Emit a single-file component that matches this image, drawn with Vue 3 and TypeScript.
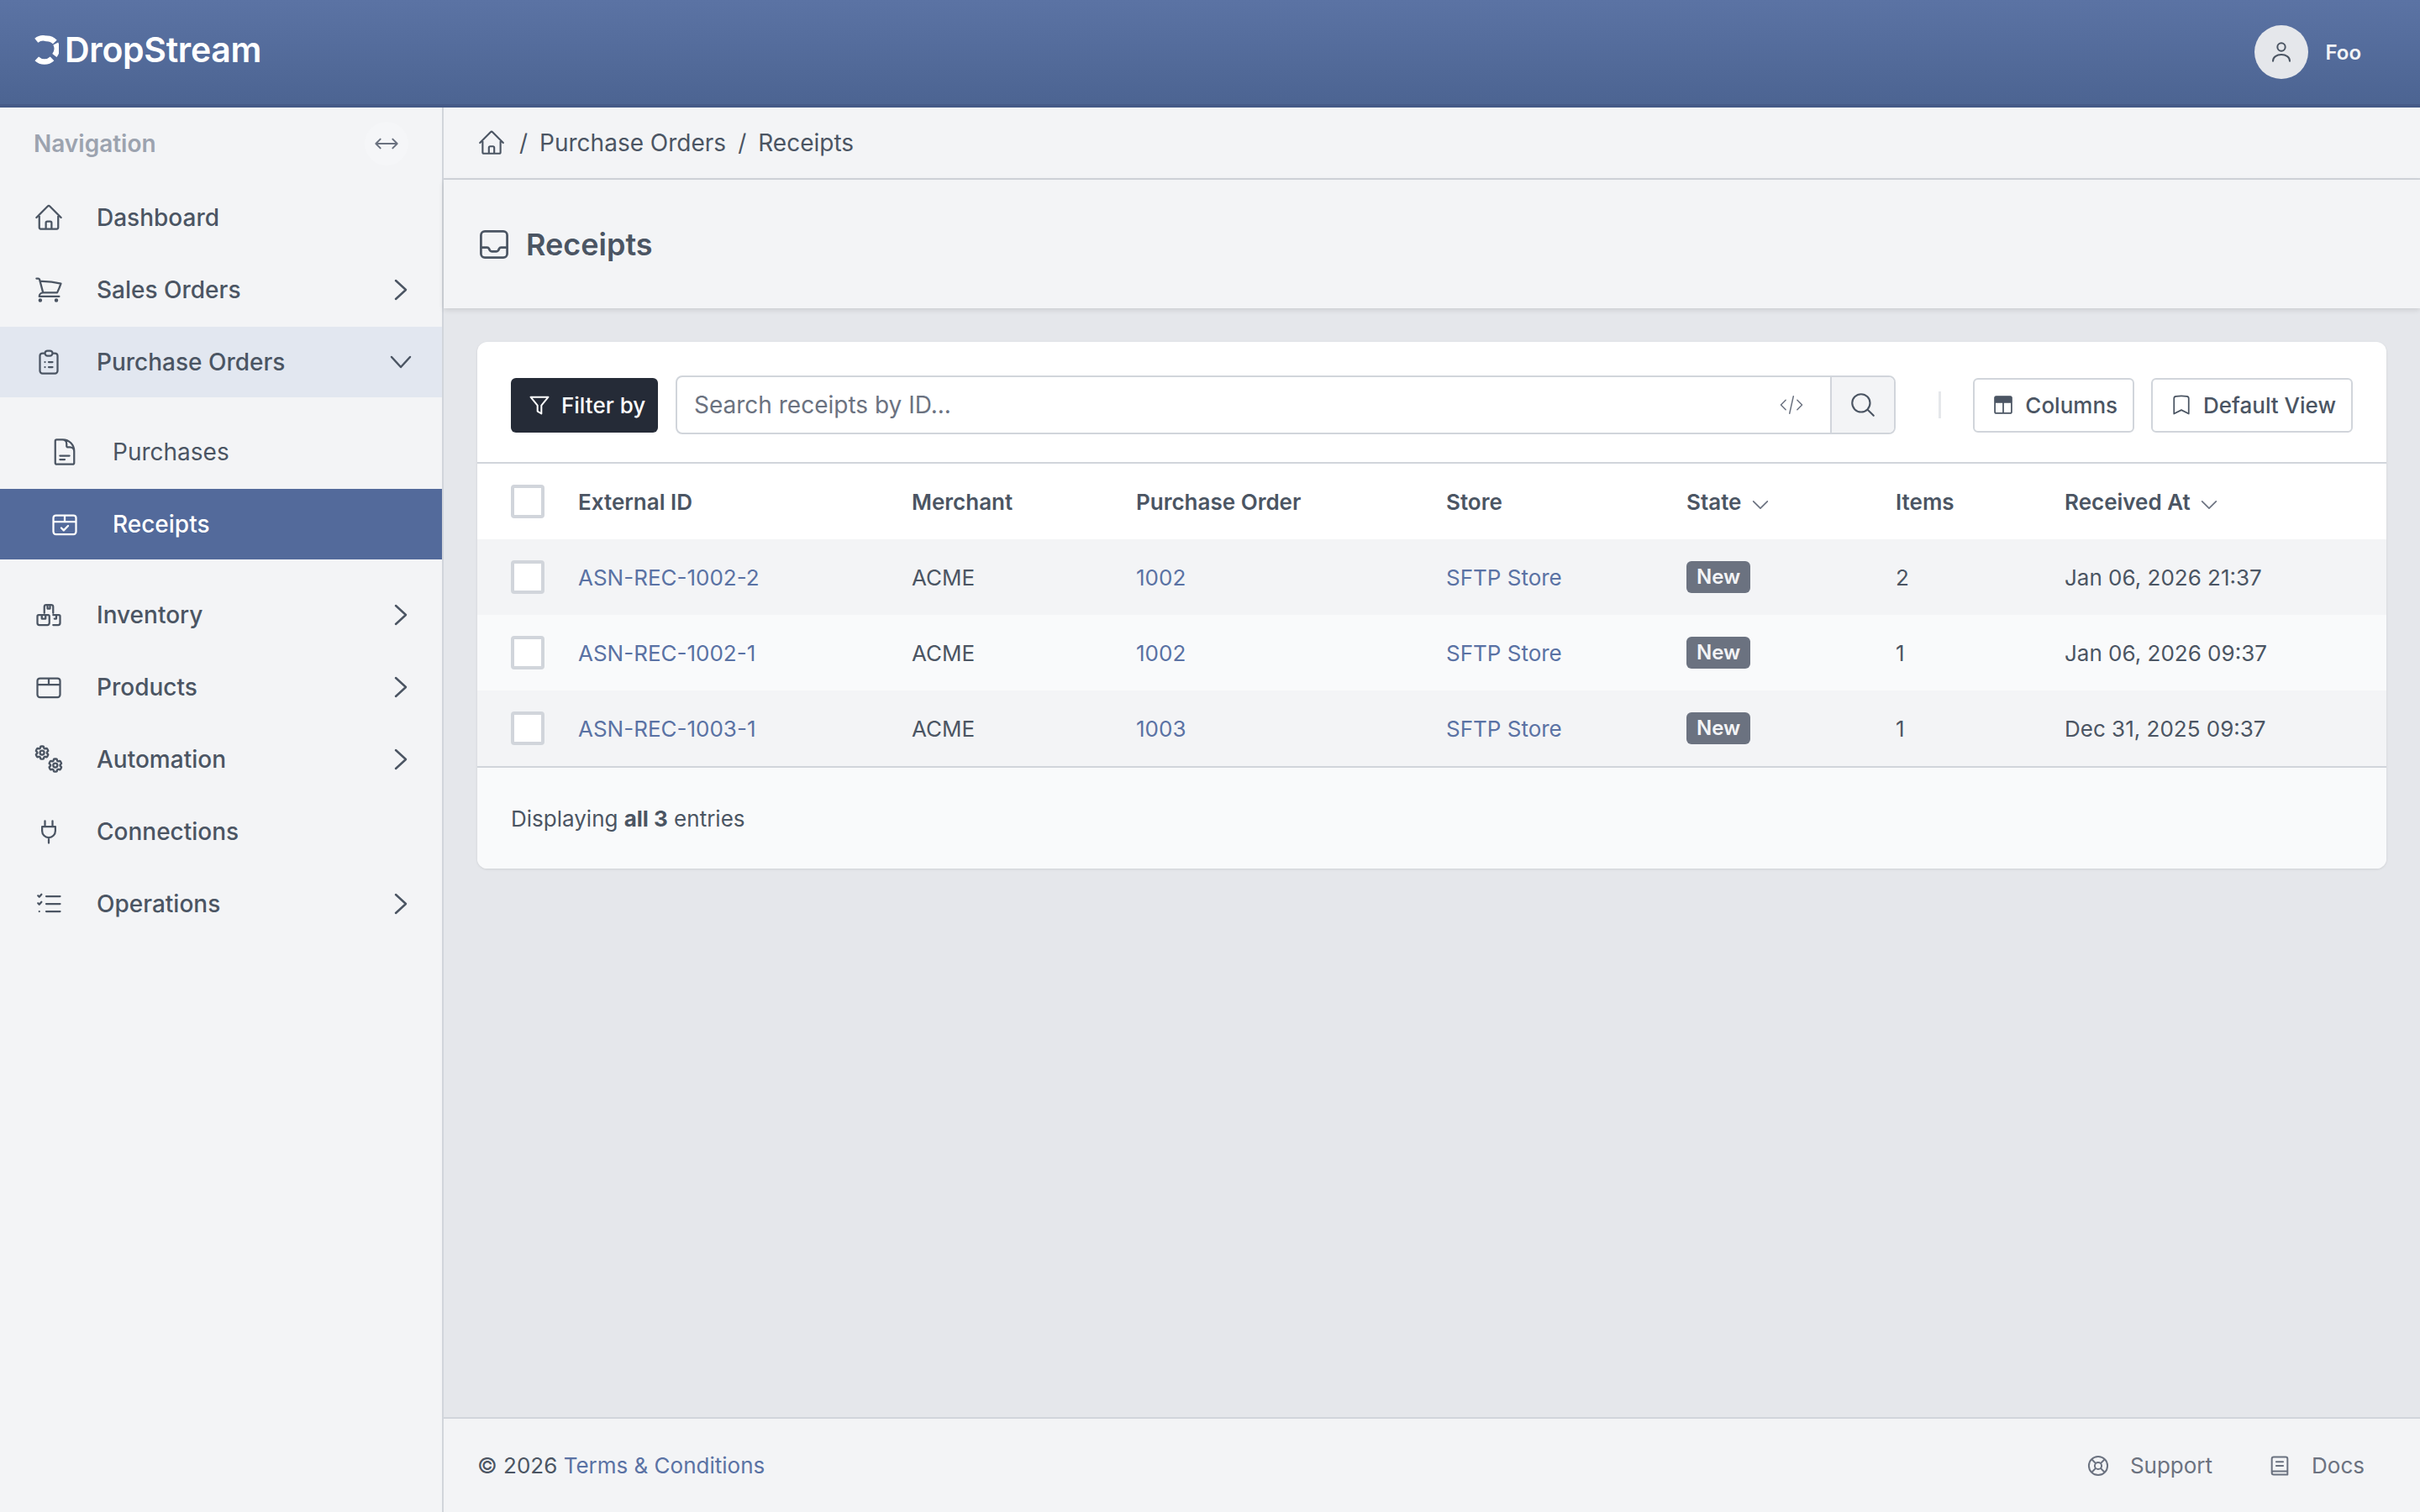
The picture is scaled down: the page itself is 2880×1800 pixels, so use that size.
<script setup lang="ts">
interface NavItem {
  label: string
  icon: string
  caret?: 'right' | 'down'
  open?: boolean
}

interface Receipt {
  id: string
  merchant: string
  order: string
  store: string
  state: string
  items: number
  receivedAt: string
}

const icons: Record<string, string> = {
  home: 'm2.25 12 8.954-8.955c.44-.439 1.152-.439 1.591 0L21.75 12M4.5 9.75v10.125c0 .621.504 1.125 1.125 1.125H9.75v-4.875c0-.621.504-1.125 1.125-1.125h2.25c.621 0 1.125.504 1.125 1.125V21h4.125c.621 0 1.125-.504 1.125-1.125V9.75M8.25 21h8.25',
  cart: 'M2.25 3h1.386c.51 0 .955.343 1.087.835l.383 1.437M7.5 14.25a3 3 0 0 0-3 3h15.75m-12.75-3h11.218c1.121-2.3 2.1-4.684 2.924-7.138a60.114 60.114 0 0 0-16.536-1.84M7.5 14.25 5.106 5.272M6 20.25a.75.75 0 1 1-1.5 0 .75.75 0 0 1 1.5 0Zm12.75 0a.75.75 0 1 1-1.5 0 .75.75 0 0 1 1.5 0Z',
  clipboard: 'M9 5H7a2 2 0 0 0-2 2v12a2 2 0 0 0 2 2h10a2 2 0 0 0 2-2V7a2 2 0 0 0-2-2h-2M9 5a2 2 0 0 0 2 2h2a2 2 0 0 0 2-2M9 5a2 2 0 0 1 2-2h2a2 2 0 0 1 2 2m-3 7h3m-3 4h3m-6-4h.01M9 16h.01',
  doc: 'M19.5 14.25v-2.625a3.375 3.375 0 0 0-3.375-3.375h-1.5A1.125 1.125 0 0 1 13.5 7.125v-1.5a3.375 3.375 0 0 0-3.375-3.375H8.25m0 12.75h7.5m-7.5 3H12M10.5 2.25H5.625c-.621 0-1.125.504-1.125 1.125v17.25c0 .621.504 1.125 1.125 1.125h12.75c.621 0 1.125-.504 1.125-1.125V11.25a9 9 0 0 0-9-9Z',
  boxCheck: 'M5 5h14a2 2 0 0 1 2 2v11a2 2 0 0 1-2 2H5a2 2 0 0 1-2-2V7a2 2 0 0 1 2-2ZM3 10h18M12 5v5M9.3 15l1.9 1.9 3.5-3.6',
  box: 'M5 5h14a2 2 0 0 1 2 2v11a2 2 0 0 1-2 2H5a2 2 0 0 1-2-2V7a2 2 0 0 1 2-2ZM3 10h18M12 5v5',
  stock: 'M8.5 10.5V5.5a1.5 1.5 0 0 1 1.5-1.5h4a1.5 1.5 0 0 1 1.5 1.5v5M11 4v3h2V4M4 12h7.5a1 1 0 0 1 1 1v5.5a1.5 1.5 0 0 1-1.5 1.5H4.5A1.5 1.5 0 0 1 3 18.500V13a1 1 0 0 1 1-1ZM6.500 12v3h3v-3M15.500 12H20a1 1 0 0 1 1 1v5.500a1.500 1.500 0 0 1-1.500 1.500h-4M18 12v3h-1.500',
  plug: 'M6.750 8h10.500v3.500a5.250 5.250 0 0 1-10.500 0V8ZM9 3.500V8M15 3.500V8M12 16.750V21',
  list: 'M10 6h11M10 12h11M10 18h11M3.500 5.500l1 1 1.750-2M3.500 11.500l1 1 1.750-2M4.500 18h.01',
  gear: 'M9.594 3.94c.09-.542.56-.94 1.11-.94h2.593c.55 0 1.02.398 1.11.94l.213 1.281c.063.374.313.686.645.87.074.04.147.083.22.127.325.196.72.257 1.075.124l1.217-.456a1.125 1.125 0 0 1 1.37.49l1.296 2.247a1.125 1.125 0 0 1-.26 1.431l-1.003.827c-.293.241-.438.613-.43.992a7.723 7.723 0 0 1 0 .255c-.008.378.137.75.43.991l1.004.827c.424.35.534.955.26 1.43l-1.298 2.247a1.125 1.125 0 0 1-1.369.491l-1.217-.456c-.355-.133-.75-.072-1.076.124a6.47 6.47 0 0 1-.22.128c-.331.183-.581.495-.644.869l-.213 1.281c-.09.543-.56.94-1.11.94h-2.594c-.55 0-1.019-.398-1.11-.94l-.213-1.281c-.062-.374-.312-.686-.644-.87a6.52 6.52 0 0 1-.22-.127c-.325-.196-.72-.257-1.076-.124l-1.217.456a1.125 1.125 0 0 1-1.369-.49l-1.297-2.247a1.125 1.125 0 0 1 .26-1.431l1.004-.827c.292-.24.437-.613.43-.991a6.932 6.932 0 0 1 0-.255c.007-.38-.138-.751-.43-.992l-1.004-.827a1.125 1.125 0 0 1-.26-1.43l1.297-2.247a1.125 1.125 0 0 1 1.37-.491l1.216.456c.356.133.751.072 1.076-.124.072-.044.146-.086.22-.128.332-.183.582-.495.644-.869l.214-1.28ZM15 12a3 3 0 1 1-6 0 3 3 0 0 1 6 0Z',
  inbox: 'M6 3.500h12A2.500 2.500 0 0 1 20.500 6v12a2.500 2.500 0 0 1-2.500 2.500H6A2.500 2.500 0 0 1 3.500 18V6A2.500 2.500 0 0 1 6 3.500ZM3.500 14h4c.6 0 1 .3 1.300.9l.3.7c.3.6.8.9 1.400.9h3c.6 0 1.100-.3 1.400-.9l.3-.7c.3-.6.7-.9 1.300-.9h4',
  search: 'm21 21-5.197-5.197m0 0A7.500 7.500 0 1 0 5.196 5.196a7.500 7.500 0 0 0 10.607 10.607Z',
  bookmark: 'M17.593 3.322c1.100.128 1.907 1.077 1.907 2.185V21L12 17.250 4.500 21V5.507c0-1.108.806-2.057 1.907-2.185a48.507 48.507 0 0 1 11.186 0Z',
}

const topItems: NavItem[] = [
  { label: 'Dashboard', icon: 'home' },
  { label: 'Sales Orders', icon: 'cart', caret: 'right' },
  { label: 'Purchase Orders', icon: 'clipboard', caret: 'down', open: true },
]

const bottomItems: NavItem[] = [
  { label: 'Inventory', icon: 'stock', caret: 'right' },
  { label: 'Products', icon: 'box', caret: 'right' },
  { label: 'Automation', icon: 'gears', caret: 'right' },
  { label: 'Connections', icon: 'plug' },
  { label: 'Operations', icon: 'list', caret: 'right' },
]

const receipts: Receipt[] = [
  { id: 'ASN-REC-1002-2', merchant: 'ACME', order: '1002', store: 'SFTP Store', state: 'New', items: 2, receivedAt: 'Jan 06, 2026 21:37' },
  { id: 'ASN-REC-1002-1', merchant: 'ACME', order: '1002', store: 'SFTP Store', state: 'New', items: 1, receivedAt: 'Jan 06, 2026 09:37' },
  { id: 'ASN-REC-1003-1', merchant: 'ACME', order: '1003', store: 'SFTP Store', state: 'New', items: 1, receivedAt: 'Dec 31, 2025 09:37' },
]
</script>

<template>
  <div class="app">
    <header class="topbar">
      <div class="brand">
        <svg class="brand-mark" viewBox="0 0 32 36" fill="none" stroke="currentColor" stroke-width="7">
          <path d="M3.500 6.500A14 14 0 0 1 16 4a14 14 0 0 1 11 4.500" />
          <path d="M28 10.500a14 14 0 0 1-1.500 15" />
          <path d="M23.500 29.500A14 14 0 0 1 4 29.500" />
        </svg>
        <span class="brand-name">DropStream</span>
      </div>
      <div class="user">
        <span class="avatar">
          <svg viewBox="0 0 24 24" fill="none" stroke="currentColor" stroke-width="1.500" stroke-linecap="round">
            <circle cx="12" cy="7.500" r="3.500" />
            <path d="M4.500 20c0-3.500 3.300-5.750 7.500-5.750s7.500 2.250 7.500 5.750" />
          </svg>
        </span>
        <span class="user-name">Foo</span>
      </div>
    </header>

    <div class="body">
      <aside class="sidebar">
        <div class="nav-head">
          <span>Navigation</span>
          <button class="nav-toggle" type="button" aria-label="Resize">
            <svg viewBox="0 0 24 24" fill="none" stroke="currentColor" stroke-width="1.500" stroke-linecap="round" stroke-linejoin="round">
              <path d="M2.500 12h19M6.500 8l-4 4 4 4M17.500 8l4 4-4 4" />
            </svg>
          </button>
        </div>

        <nav class="nav">
          <a v-for="item in topItems" :key="item.label" class="nav-item" :class="{ open: item.open }">
            <svg class="nav-icon" viewBox="0 0 24 24" fill="none" stroke="currentColor" stroke-width="1.500" stroke-linecap="round" stroke-linejoin="round">
              <path :d="icons[item.icon]" />
            </svg>
            <span>{{ item.label }}</span>
            <svg v-if="item.caret === 'right'" class="caret" viewBox="0 0 16 26" fill="none" stroke="currentColor" stroke-width="2.500" stroke-linecap="round" stroke-linejoin="round">
              <path d="M2 2l12 11L2 24" />
            </svg>
            <svg v-if="item.caret === 'down'" class="caret-down" viewBox="0 0 26 16" fill="none" stroke="currentColor" stroke-width="2.500" stroke-linecap="round" stroke-linejoin="round">
              <path d="M2 2l11 12L24 2" />
            </svg>
          </a>

          <div class="subnav">
            <a class="nav-item sub">
              <svg class="nav-icon" viewBox="0 0 24 24" fill="none" stroke="currentColor" stroke-width="1.500" stroke-linecap="round" stroke-linejoin="round">
                <path :d="icons.doc" />
              </svg>
              <span>Purchases</span>
            </a>
            <a class="nav-item sub active">
              <svg class="nav-icon" viewBox="0 0 24 24" fill="none" stroke="currentColor" stroke-width="1.500" stroke-linecap="round" stroke-linejoin="round">
                <path :d="icons.boxCheck" />
              </svg>
              <span>Receipts</span>
            </a>
          </div>

          <a v-for="item in bottomItems" :key="item.label" class="nav-item">
            <svg v-if="item.icon === 'gears'" class="nav-icon" viewBox="0 0 24 24" fill="none" stroke="currentColor" stroke-width="2.800" stroke-linecap="round" stroke-linejoin="round">
              <g transform="translate(0 0) scale(.56)"><path :d="icons.gear" /></g>
              <g transform="translate(10.500 10) scale(.56)"><path :d="icons.gear" /></g>
            </svg>
            <svg v-else class="nav-icon" viewBox="0 0 24 24" fill="none" stroke="currentColor" stroke-width="1.500" stroke-linecap="round" stroke-linejoin="round">
              <path :d="icons[item.icon]" />
            </svg>
            <span>{{ item.label }}</span>
            <svg v-if="item.caret === 'right'" class="caret" viewBox="0 0 16 26" fill="none" stroke="currentColor" stroke-width="2.500" stroke-linecap="round" stroke-linejoin="round">
              <path d="M2 2l12 11L2 24" />
            </svg>
          </a>
        </nav>
      </aside>

      <main class="main">
        <div class="crumbs">
          <svg class="crumb-home" viewBox="0 0 24 24" fill="none" stroke="currentColor" stroke-width="1.500" stroke-linecap="round" stroke-linejoin="round">
            <path :d="icons.home" />
          </svg>
          <span class="sep">/</span>
          <a>Purchase Orders</a>
          <span class="sep">/</span>
          <a>Receipts</a>
        </div>

        <div class="page-head">
          <svg class="page-icon" viewBox="0 0 24 24" fill="none" stroke="currentColor" stroke-width="1.500" stroke-linecap="round" stroke-linejoin="round">
            <path :d="icons.inbox" />
          </svg>
          <h1>Receipts</h1>
        </div>

        <div class="content">
          <section class="card">
            <div class="toolbar">
              <button class="btn-filter" type="button">
                <svg viewBox="0 0 24 24" fill="none" stroke="currentColor" stroke-width="1.700" stroke-linejoin="round">
                  <path d="M3 4h18l-7 8.500V21l-4-2.500v-6z" />
                </svg>
                Filter by
              </button>
              <div class="search">
                <span class="search-text">Search receipts by ID...</span>
                <svg class="code-icon" viewBox="0 0 28 24" fill="none" stroke="currentColor" stroke-width="1.300" stroke-linecap="round" stroke-linejoin="round">
                  <path d="M8 7l-5 5 5 5M20 7l5 5-5 5M16 3l-4 18" />
                </svg>
                <span class="search-btn">
                  <svg viewBox="0 0 24 24" fill="none" stroke="currentColor" stroke-width="1.500" stroke-linecap="round" stroke-linejoin="round">
                    <path :d="icons.search" />
                  </svg>
                </span>
              </div>
              <span class="divider"></span>
              <button class="btn-plain" type="button">
                <svg viewBox="0 0 24 24" fill="none" stroke="currentColor" stroke-width="1.500" stroke-linejoin="round">
                  <rect x="3.500" y="3.500" width="17" height="17" rx="1.500" />
                  <path d="M3.500 9h17M12 9v11.500" />
                  <path d="M4 4h16v5H4z" fill="currentColor" />
                </svg>
                Columns
              </button>
              <button class="btn-plain" type="button">
                <svg viewBox="0 0 24 24" fill="none" stroke="currentColor" stroke-width="1.500" stroke-linejoin="round">
                  <path :d="icons.bookmark" />
                </svg>
                Default View
              </button>
            </div>

            <table class="grid">
              <colgroup>
                <col class="c-check" />
                <col class="c-id" />
                <col class="c-merchant" />
                <col class="c-order" />
                <col class="c-store" />
                <col class="c-state" />
                <col class="c-items" />
                <col />
              </colgroup>
              <thead>
                <tr>
                  <th class="check-cell"><span class="check"></span></th>
                  <th>External ID</th>
                  <th>Merchant</th>
                  <th>Purchase Order</th>
                  <th>Store</th>
                  <th>
                    State
                    <svg class="sort" viewBox="0 0 24 14" fill="none" stroke="currentColor" stroke-width="2" stroke-linecap="round" stroke-linejoin="round"><path d="M2 2l10 10L22 2" /></svg>
                  </th>
                  <th>Items</th>
                  <th>
                    Received At
                    <svg class="sort" viewBox="0 0 24 14" fill="none" stroke="currentColor" stroke-width="2" stroke-linecap="round" stroke-linejoin="round"><path d="M2 2l10 10L22 2" /></svg>
                  </th>
                </tr>
              </thead>
              <tbody>
                <tr v-for="row in receipts" :key="row.id">
                  <td class="check-cell"><span class="check"></span></td>
                  <td><a>{{ row.id }}</a></td>
                  <td>{{ row.merchant }}</td>
                  <td><a>{{ row.order }}</a></td>
                  <td><a>{{ row.store }}</a></td>
                  <td><span class="badge">{{ row.state }}</span></td>
                  <td>{{ row.items }}</td>
                  <td>{{ row.receivedAt }}</td>
                </tr>
              </tbody>
            </table>

            <div class="card-foot">Displaying <b>all 3</b> entries</div>
          </section>
        </div>

        <footer class="foot">
          <div class="foot-left">© 2026 <a>Terms &amp; Conditions</a></div>
          <div class="foot-links">
            <span class="foot-link">
              <svg viewBox="0 0 24 24" fill="none" stroke="currentColor" stroke-width="1.700">
                <circle cx="12" cy="12" r="9.500" />
                <circle cx="12" cy="12" r="3.500" />
                <path d="M5.200 5.200l4.300 4.300M18.800 5.200l-4.300 4.300M5.200 18.800l4.300-4.300M18.800 18.800l-4.300-4.300" />
              </svg>
              Support
            </span>
            <span class="foot-link">
              <svg viewBox="0 0 24 24" fill="none" stroke="currentColor" stroke-width="1.700" stroke-linecap="round" stroke-linejoin="round">
                <path d="M20 17.500H5.500A1.500 1.500 0 0 0 4 19a2 2 0 0 0 2 2h14M4 19V5a2 2 0 0 1 2-2h12a2 2 0 0 1 2 2v16M8.500 8h7M8.500 12h7" />
              </svg>
              Docs
            </span>
          </div>
        </footer>
      </main>
    </div>
  </div>
</template>

<style>
html,
body {
  margin: 0;
  background: #e5e7eb;
}
</style>

<style scoped>
.app {
  display: flex;
  flex-direction: column;
  height: 100vh;
  font-family: Inter, "Liberation Sans", sans-serif;
  font-size: 28px;
  color: #4b5563;
}

/* Header */
.topbar {
  display: flex;
  align-items: center;
  justify-content: space-between;
  height: 124px;
  flex-shrink: 0;
  padding: 0 70px 0 40px;
  background: linear-gradient(180deg, #5b73a4, #4c6492);
  border-bottom: 4px solid #455a87;
}

.brand {
  display: flex;
  align-items: center;
  gap: 7px;
  color: #fff;
  margin-top: -6px;
}

.brand-mark {
  width: 30px;
  height: 36px;
}

.brand-name {
  font-size: 41px;
  font-weight: 600;
  letter-spacing: -0.3px;
}

.user {
  display: flex;
  align-items: center;
  gap: 20px;
}

.avatar {
  display: flex;
  align-items: center;
  justify-content: center;
  width: 64px;
  height: 64px;
  border-radius: 50%;
  background: #e5e7eb;
  color: #4b5563;
}

.avatar svg {
  width: 32px;
  height: 32px;
}

.user-name {
  font-size: 24px;
  font-weight: 600;
  color: #f3f4f6;
}

.body {
  display: flex;
  flex: 1;
  min-height: 0;
}

/* Sidebar */
.sidebar {
  width: 526px;
  flex-shrink: 0;
  background: #f3f4f6;
  border-right: 2px solid #d1d5db;
}

.nav-head {
  display: flex;
  align-items: center;
  justify-content: space-between;
  height: 86px;
  margin-bottom: 3px;
  padding: 0 40px;
  font-weight: 600;
  color: #9ca3af;
}

.nav-toggle {
  display: flex;
  align-items: center;
  justify-content: center;
  width: 52px;
  height: 52px;
  padding: 0;
  margin-right: 0;
  border: 0;
  border-radius: 50%;
  background: #f5f6f8;
  color: #6b7280;
}

.nav-toggle svg {
  width: 32px;
  height: 32px;
}

.nav {
  display: flex;
  flex-direction: column;
  gap: 2px;
}

.nav-item {
  display: flex;
  align-items: center;
  gap: 39px;
  height: 84px;
  padding: 0 38px 0 40px;
  font-weight: 500;
}

.nav-item.open {
  background: #e2e7f0;
}

.nav-item > span {
  flex: 1;
}

.nav-icon {
  width: 36px;
  height: 36px;
  flex-shrink: 0;
}

.caret {
  width: 16px;
  height: 26px;
  margin-right: 3px;
}

.caret-down {
  width: 26px;
  height: 16px;
  margin-right: -2px;
}

.subnav {
  display: flex;
  flex-direction: column;
  gap: 2px;
  padding: 21px 0 22px;
}

.nav-item.sub {
  padding-left: 59px;
  font-weight: 400;
}

.nav-item.active {
  background: #536a9b;
  color: #fff;
  font-weight: 500;
}

/* Main */
.main {
  display: flex;
  flex-direction: column;
  flex: 1;
  min-width: 0;
}

.crumbs {
  display: flex;
  align-items: center;
  gap: 14px;
  height: 84px;
  flex-shrink: 0;
  padding: 0 40px;
  background: #f3f4f6;
  border-bottom: 2px solid #d1d5db;
}

.crumb-home {
  width: 34px;
  height: 34px;
  margin-right: 2px;
}

.page-head {
  display: flex;
  align-items: center;
  gap: 16px;
  height: 153px;
  flex-shrink: 0;
  padding: 0 40px;
  background: #f3f4f6;
  box-shadow: 0 2px 6px rgba(0, 0, 0, 0.12);
  position: relative;
}

.page-icon {
  width: 44px;
  height: 44px;
  margin-left: -2px;
  color: #4b5563;
}

.page-head h1 {
  margin: 0;
  font-size: 36px;
  font-weight: 600;
  color: #4b5563;
}

.content {
  flex: 1;
  padding: 40px;
  min-height: 0;
}

.card {
  background: #fff;
  border-radius: 12px;
  box-shadow: 0 1px 3px rgba(0, 0, 0, 0.1);
  overflow: hidden;
}

.toolbar {
  display: flex;
  align-items: center;
  padding: 40px 40px 33px;
  border-bottom: 2px solid #d1d5db;
  font-size: 26px;
}

.btn-filter {
  display: flex;
  align-items: center;
  gap: 12px;
  height: 65px;
  width: 175px;
  padding: 0 0 0 20px;
  border: 0;
  border-radius: 6px;
  background: #252b37;
  color: #fff;
  font: inherit;
  font-weight: 500;
  white-space: nowrap;
}

.btn-filter svg {
  width: 28px;
  height: 28px;
  flex-shrink: 0;
}

.search {
  display: flex;
  align-items: center;
  flex: 1;
  height: 70px;
  box-sizing: border-box;
  margin: 0 51px 0 21px;
  border: 2px solid #d1d5db;
  border-radius: 8px;
  overflow: hidden;
}

.search-text {
  flex: 1;
  padding-left: 20px;
  font-size: 28px;
  color: #6b7280;
}

.code-icon {
  width: 32px;
  height: 28px;
  margin-right: 30px;
  color: #6b7280;
}

.search-btn {
  display: flex;
  align-items: center;
  justify-content: center;
  width: 74px;
  height: 100%;
  background: #f3f4f6;
  border-left: 2px solid #d1d5db;
}

.search-btn svg {
  width: 34px;
  height: 34px;
}

.divider {
  width: 3px;
  height: 32px;
  margin-right: 38px;
  background: #e5e7eb;
}

.btn-plain {
  display: flex;
  align-items: center;
  gap: 12px;
  height: 65px;
  padding: 0 18px 0 20px;
  box-sizing: border-box;
  margin-right: 20px;
  border: 2px solid #d1d5db;
  border-radius: 6px;
  background: #fff;
  color: #4b5563;
  font: inherit;
  font-weight: 500;
}

.btn-plain:last-child {
  margin-right: 0;
}

.btn-plain svg {
  width: 28px;
  height: 28px;
}

.grid {
  width: 100%;
  table-layout: fixed;
  border-collapse: collapse;
  font-size: 26px;
}

.c-check {
  width: 120px;
}

.c-id {
  width: 397px;
}

.c-merchant {
  width: 267px;
}

.c-order {
  width: 369px;
}

.c-store {
  width: 286px;
}

.c-state {
  width: 249px;
}

.c-items {
  width: 201px;
}

.grid th {
  height: 90px;
  padding: 0;
  font-weight: 600;
  text-align: left;
  color: #4b5563;
}

.grid td {
  height: 90px;
  padding: 0;
  color: #4b5563;
}

.grid tbody tr:nth-child(odd) {
  background: #f3f4f6;
}

.grid tbody tr:nth-child(even) {
  background: #f9fafb;
}

.grid a {
  color: #5a72a4;
}

.check-cell {
  padding-left: 40px !important;
}

.check {
  display: block;
  width: 40px;
  height: 40px;
  box-sizing: border-box;
  border: 4px solid #d1d5db;
  border-radius: 4px;
  background: #fff;
}

.sort {
  width: 20px;
  height: 12px;
  margin-left: 6px;
  color: #6b7280;
}

.badge {
  display: inline-block;
  padding: 0 12px;
  line-height: 38px;
  border-radius: 6px;
  background: #6b7280;
  color: #f3f4f6;
  font-size: 24px;
  font-weight: 600;
}

.card-foot {
  display: flex;
  align-items: center;
  gap: 0.28em;
  height: 120px;
  padding: 0 40px;
  background: #f9fafb;
  border-top: 2px solid #d1d5db;
  font-size: 26px;
}

.card-foot b {
  font-weight: 700;
}

.foot {
  display: flex;
  align-items: center;
  justify-content: space-between;
  height: 111px;
  flex-shrink: 0;
  padding: 0 66px 0 40px;
  background: #f3f4f6;
  border-top: 2px solid #d1d5db;
  font-size: 26px;
}

.foot-left a {
  color: #5a72a4;
}

.foot-links {
  display: flex;
  gap: 66px;
}

.foot-link {
  display: flex;
  align-items: center;
  gap: 24px;
  color: #6b7280;
}

.foot-link svg {
  width: 28px;
  height: 28px;
}
</style>
